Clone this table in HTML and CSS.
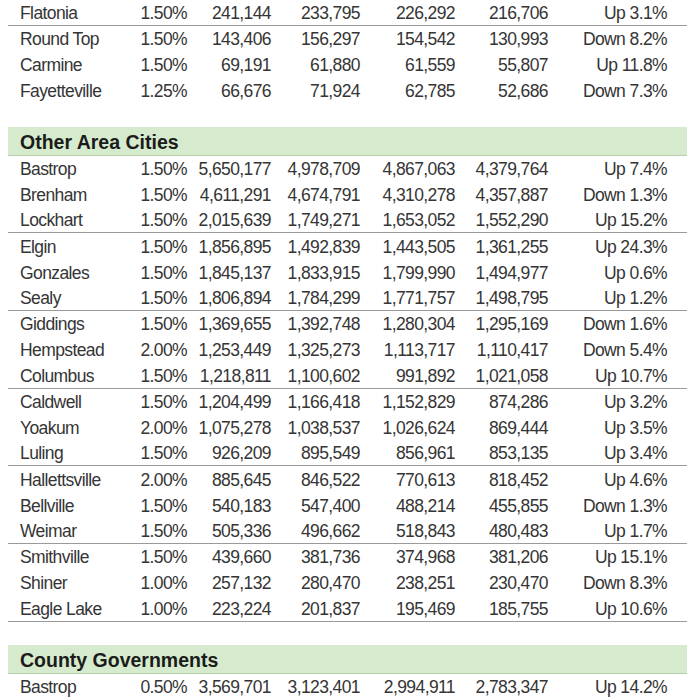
FILE: index.html
```html
<!DOCTYPE html>
<html lang="en">
<head>
<meta charset="UTF-8">
<meta name="viewport" content="width=device-width, initial-scale=1.0">
<title>Sales Tax Allocations</title>
<link rel="stylesheet" href="styles.css">
</head>
<body>

<div class="taxTable">

    <div class="group">
        <div class="row"><span class="city">Flatonia</span><span>1.50%</span><span>241,144</span><span>233,795</span><span>226,292</span><span>216,706</span><span class="change">Up 3.1%</span></div>
    </div>
    <div class="group noLine">
        <div class="row"><span class="city">Round Top</span><span>1.50%</span><span>143,406</span><span>156,297</span><span>154,542</span><span>130,993</span><span class="change">Down 8.2%</span></div>
        <div class="row"><span class="city">Carmine</span><span>1.50%</span><span>69,191</span><span>61,880</span><span>61,559</span><span>55,807</span><span class="change">Up 11.8%</span></div>
        <div class="row"><span class="city">Fayetteville</span><span>1.25%</span><span>66,676</span><span>71,924</span><span>62,785</span><span>52,686</span><span class="change">Down 7.3%</span></div>
    </div>

    <div class="sectionHead">Other Area Cities</div>
    <div class="group">
        <div class="row"><span class="city">Bastrop</span><span>1.50%</span><span>5,650,177</span><span>4,978,709</span><span>4,867,063</span><span>4,379,764</span><span class="change">Up 7.4%</span></div>
        <div class="row"><span class="city">Brenham</span><span>1.50%</span><span>4,611,291</span><span>4,674,791</span><span>4,310,278</span><span>4,357,887</span><span class="change">Down 1.3%</span></div>
        <div class="row"><span class="city">Lockhart</span><span>1.50%</span><span>2,015,639</span><span>1,749,271</span><span>1,653,052</span><span>1,552,290</span><span class="change">Up 15.2%</span></div>
    </div>
    <div class="group">
        <div class="row"><span class="city">Elgin</span><span>1.50%</span><span>1,856,895</span><span>1,492,839</span><span>1,443,505</span><span>1,361,255</span><span class="change">Up 24.3%</span></div>
        <div class="row"><span class="city">Gonzales</span><span>1.50%</span><span>1,845,137</span><span>1,833,915</span><span>1,799,990</span><span>1,494,977</span><span class="change">Up 0.6%</span></div>
        <div class="row"><span class="city">Sealy</span><span>1.50%</span><span>1,806,894</span><span>1,784,299</span><span>1,771,757</span><span>1,498,795</span><span class="change">Up 1.2%</span></div>
    </div>
    <div class="group">
        <div class="row"><span class="city">Giddings</span><span>1.50%</span><span>1,369,655</span><span>1,392,748</span><span>1,280,304</span><span>1,295,169</span><span class="change">Down 1.6%</span></div>
        <div class="row"><span class="city">Hempstead</span><span>2.00%</span><span>1,253,449</span><span>1,325,273</span><span>1,113,717</span><span>1,110,417</span><span class="change">Down 5.4%</span></div>
        <div class="row"><span class="city">Columbus</span><span>1.50%</span><span>1,218,811</span><span>1,100,602</span><span>991,892</span><span>1,021,058</span><span class="change">Up 10.7%</span></div>
    </div>
    <div class="group">
        <div class="row"><span class="city">Caldwell</span><span>1.50%</span><span>1,204,499</span><span>1,166,418</span><span>1,152,829</span><span>874,286</span><span class="change">Up 3.2%</span></div>
        <div class="row"><span class="city">Yoakum</span><span>2.00%</span><span>1,075,278</span><span>1,038,537</span><span>1,026,624</span><span>869,444</span><span class="change">Up 3.5%</span></div>
        <div class="row"><span class="city">Luling</span><span>1.50%</span><span>926,209</span><span>895,549</span><span>856,961</span><span>853,135</span><span class="change">Up 3.4%</span></div>
    </div>
    <div class="group">
        <div class="row"><span class="city">Hallettsville</span><span>2.00%</span><span>885,645</span><span>846,522</span><span>770,613</span><span>818,452</span><span class="change">Up 4.6%</span></div>
        <div class="row"><span class="city">Bellville</span><span>1.50%</span><span>540,183</span><span>547,400</span><span>488,214</span><span>455,855</span><span class="change">Down 1.3%</span></div>
        <div class="row"><span class="city">Weimar</span><span>1.50%</span><span>505,336</span><span>496,662</span><span>518,843</span><span>480,483</span><span class="change">Up 1.7%</span></div>
    </div>
    <div class="group">
        <div class="row"><span class="city">Smithville</span><span>1.50%</span><span>439,660</span><span>381,736</span><span>374,968</span><span>381,206</span><span class="change">Up 15.1%</span></div>
        <div class="row"><span class="city">Shiner</span><span>1.00%</span><span>257,132</span><span>280,470</span><span>238,251</span><span>230,470</span><span class="change">Down 8.3%</span></div>
        <div class="row"><span class="city">Eagle Lake</span><span>1.00%</span><span>223,224</span><span>201,837</span><span>195,469</span><span>185,755</span><span class="change">Up 10.6%</span></div>
    </div>

    <div class="sectionHead">County Governments</div>
    <div class="group noLine">
        <div class="row"><span class="city">Bastrop</span><span>0.50%</span><span>3,569,701</span><span>3,123,401</span><span>2,994,911</span><span>2,783,347</span><span class="change">Up 14.2%</span></div>
    </div>

</div>

</body>
</html>
```

FILE: styles.css
```css
body {
    margin: 0;
    background: #fff;
    font-family: "Liberation Sans", Arial, sans-serif;
    color: #353535;
}
.taxTable {
    width: 679px;
    margin-left: 8px;
}
.row {
    display: grid;
    grid-template-columns: 120px 59px 84px 89px 95px 93px 139px;
    align-items: center;
    height: 25.9px;
    box-sizing: border-box;
    padding-top: 2px;
    font-size: 17.5px;
    letter-spacing: -0.6px;
    white-space: nowrap;
}
.row span {
    text-align: right;
}
.row .city {
    text-align: left;
    padding-left: 12px;
}
.row .change {
    padding-right: 20px;
}
.group .row:last-child {
    border-bottom: 1px solid #9a9a9a;
}
.group.noLine .row:last-child {
    border-bottom: none;
}
.sectionHead {
    margin-top: 23px;
    height: 29px;
    box-sizing: border-box;
    padding: 4px 0 0 12px;
    background: #d6ebcd;
    border-bottom: 1px solid #b7d0ab;
    font-size: 19.5px;
    font-weight: bold;
    color: #1b1b1b;
}
```
